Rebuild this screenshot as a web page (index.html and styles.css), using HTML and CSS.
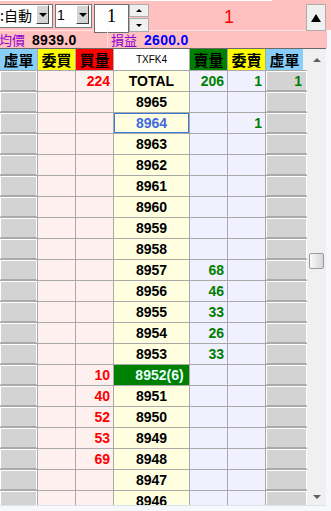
FILE: index.html
```html
<!DOCTYPE html>
<html lang="zh-Hant">
<head>
    <meta charset="UTF-8">
    <meta name="viewport" content="width=device-width, initial-scale=1.0">
    <title>TXFK4</title>
    <link rel="stylesheet" href="styles.css">
</head>
<body>
    <div id="top">
        <div class="combo" id="mode"><span class="combo_text">:自動</span><span class="drop"><i class="tri_down"></i></span></div>
        <div class="combo" id="lots"><span class="combo_text">1</span><span class="drop"><i class="tri_down"></i></span></div>
        <div id="qty">1</div>
        <div id="spin">
            <span class="spin_btn"><i class="tri_up small"></i></span>
            <span class="spin_btn"><i class="tri_down small"></i></span>
        </div>
        <div id="pos">1</div>
        <div id="collapse"><i class="tri_up big"></i></div>
    </div>
    <div id="info">
        <div class="half" id="avg"><span class="label">均價</span><span class="value">8939.0</span></div>
        <div class="half" id="pnl"><span class="label">損益</span><span class="value blue">2600.0</span></div>
    </div>
    <div id="board">
        <div id="grid">
            <div class="row head">
                <div class="h_ghost">虛單</div><div class="h_bid">委買</div><div class="h_bidq">買量</div><div class="h_sym">TXFK4</div><div class="h_askq">賣量</div><div class="h_ask">委賣</div><div class="h_ghost last">虛單</div>
            </div>
            <div class="row">
                <div class="k"></div><div class="b"></div><div class="b num red">224</div><div class="p">TOTAL</div><div class="s num green">206</div><div class="s num green">1</div><div class="k num green">1</div>
            </div>
            <div class="row">
                <div class="k"></div><div class="b"></div><div class="b"></div><div class="p">8965</div><div class="s"></div><div class="s"></div><div class="k"></div>
            </div>
            <div class="row">
                <div class="k"></div><div class="b"></div><div class="b"></div><div class="p sel">8964</div><div class="s"></div><div class="s num green">1</div><div class="k"></div>
            </div>
            <div class="row">
                <div class="k"></div><div class="b"></div><div class="b"></div><div class="p">8963</div><div class="s"></div><div class="s"></div><div class="k"></div>
            </div>
            <div class="row">
                <div class="k"></div><div class="b"></div><div class="b"></div><div class="p">8962</div><div class="s"></div><div class="s"></div><div class="k"></div>
            </div>
            <div class="row">
                <div class="k"></div><div class="b"></div><div class="b"></div><div class="p">8961</div><div class="s"></div><div class="s"></div><div class="k"></div>
            </div>
            <div class="row">
                <div class="k"></div><div class="b"></div><div class="b"></div><div class="p">8960</div><div class="s"></div><div class="s"></div><div class="k"></div>
            </div>
            <div class="row">
                <div class="k"></div><div class="b"></div><div class="b"></div><div class="p">8959</div><div class="s"></div><div class="s"></div><div class="k"></div>
            </div>
            <div class="row">
                <div class="k"></div><div class="b"></div><div class="b"></div><div class="p">8958</div><div class="s"></div><div class="s"></div><div class="k"></div>
            </div>
            <div class="row">
                <div class="k"></div><div class="b"></div><div class="b"></div><div class="p">8957</div><div class="s num green">68</div><div class="s"></div><div class="k"></div>
            </div>
            <div class="row">
                <div class="k"></div><div class="b"></div><div class="b"></div><div class="p">8956</div><div class="s num green">46</div><div class="s"></div><div class="k"></div>
            </div>
            <div class="row">
                <div class="k"></div><div class="b"></div><div class="b"></div><div class="p">8955</div><div class="s num green">33</div><div class="s"></div><div class="k"></div>
            </div>
            <div class="row">
                <div class="k"></div><div class="b"></div><div class="b"></div><div class="p">8954</div><div class="s num green">26</div><div class="s"></div><div class="k"></div>
            </div>
            <div class="row">
                <div class="k"></div><div class="b"></div><div class="b"></div><div class="p">8953</div><div class="s num green">33</div><div class="s"></div><div class="k"></div>
            </div>
            <div class="row">
                <div class="k"></div><div class="b"></div><div class="b num red">10</div><div class="p hit">8952(6)</div><div class="s"></div><div class="s"></div><div class="k"></div>
            </div>
            <div class="row">
                <div class="k"></div><div class="b"></div><div class="b num red">40</div><div class="p">8951</div><div class="s"></div><div class="s"></div><div class="k"></div>
            </div>
            <div class="row">
                <div class="k"></div><div class="b"></div><div class="b num red">52</div><div class="p">8950</div><div class="s"></div><div class="s"></div><div class="k"></div>
            </div>
            <div class="row">
                <div class="k"></div><div class="b"></div><div class="b num red">53</div><div class="p">8949</div><div class="s"></div><div class="s"></div><div class="k"></div>
            </div>
            <div class="row">
                <div class="k"></div><div class="b"></div><div class="b num red">69</div><div class="p">8948</div><div class="s"></div><div class="s"></div><div class="k"></div>
            </div>
            <div class="row">
                <div class="k"></div><div class="b"></div><div class="b"></div><div class="p">8947</div><div class="s"></div><div class="s"></div><div class="k"></div>
            </div>
            <div class="row">
                <div class="k"></div><div class="b"></div><div class="b"></div><div class="p">8946</div><div class="s"></div><div class="s"></div><div class="k"></div>
            </div>
        </div>
        <div id="vscroll">
            <div class="sb_arrow up"><i class="tri_up tiny"></i></div>
            <div class="sb_track"><div class="sb_thumb"></div></div>
            <div class="sb_arrow down"><i class="tri_down tiny"></i></div>
        </div>
    </div>
</body>
</html>
```

FILE: styles.css
```css
body{
    margin: 0;
    width: 331px;
    height: 511px;
    overflow: hidden;
    background: #f6f8fb;
    font-family: "Liberation Sans", Arial, sans-serif;
}

/* top toolbar */
#top{
    display: flex;
    align-items: flex-start;
    height: 30px;
    background: linear-gradient(#fff, #fff) no-repeat 0 0 / 272px 1px, #ffc0c0;
}
.combo{
    display: flex;
    margin-top: 4px;
    height: 22px;
    border: 1px solid #7a7a7a;
    background: #fff;
}
#mode{
    width: 52px;
    border-left: none;
}
#lots{
    width: 35px;
    margin-left: 2px;
}
.combo_text{
    flex: 1;
    font-size: 14px;
    line-height: 20px;
    white-space: nowrap;
    overflow: hidden;
}
#mode .combo_text{
    font-family: "Noto Sans CJK TC", sans-serif;
}
#lots .combo_text{
    padding-left: 1px;
}
.drop{
    display: flex;
    align-items: center;
    justify-content: center;
    box-sizing: border-box;
    width: 13px;
    height: 19px;
    margin-right: 3px;
    background: #d4d4d4;
    border: 1px solid;
    border-color: #fff #404040 #404040 #fff;
}
#lots .drop{
    margin-right: 2px;
}
.tri_down{
    width: 0;
    height: 0;
    border-left: 4px solid transparent;
    border-right: 4px solid transparent;
    border-top: 4px solid #000;
}
.tri_up{
    width: 0;
    height: 0;
    border-left: 4px solid transparent;
    border-right: 4px solid transparent;
    border-bottom: 4px solid #000;
}
.tri_down.small{
    border-width: 3px 3px 0;
}
.tri_up.small{
    border-width: 0 3px 3px;
}
.tri_up.big{
    border-width: 0 5px 8px;
}
.tri_up.tiny{
    border-width: 0 4px 4px;
    border-bottom-color: #606060;
}
.tri_down.tiny{
    border-width: 4px 4px 0;
    border-top-color: #606060;
}
#qty{
    box-sizing: border-box;
    width: 35px;
    height: 29px;
    margin: 4px 0 0 2px;
    background: #fff;
    border: 1px solid #6e6e6e;
    text-align: center;
    font-family: "Liberation Serif", serif;
    font-size: 19px;
    line-height: 22px;
}
#spin{
    display: flex;
    flex-direction: column;
    gap: 1px;
    width: 20px;
    margin-top: 4px;
}
.spin_btn{
    display: flex;
    align-items: center;
    justify-content: center;
    box-sizing: border-box;
    height: 13px;
    background: #f0f0f0;
    border: 1px solid #adadad;
}
.spin_btn + .spin_btn{
    height: 14px;
}
#pos{
    flex: 1;
    padding: 7px 0 0 3px;
    text-align: center;
    color: #ff0000;
    font-size: 18px;
    line-height: 20px;
}
#collapse{
    display: flex;
    align-items: center;
    justify-content: center;
    box-sizing: border-box;
    width: 20px;
    height: 27px;
    margin: 4px 5px 0 0;
    background: #f0f0f0;
    border: 1px solid #adadad;
}

/* average / profit strip */
#info{
    display: flex;
    width: 327px;
    height: 17px;
    border-top: 1px solid #ffe4e4;
    background: #ffc0c0;
}
.half{
    display: flex;
    align-items: center;
}
#avg{
    width: 107px;
    border-right: 1px solid #ffdcdc;
}
#avg .label{
    margin-left: -1px;
}
#pnl .label{
    margin-left: 3px;
}
.label{
    color: #9400d3;
    font-family: "Noto Sans CJK TC", sans-serif;
    font-size: 13px;
    line-height: 17px;
}
.value{
    margin-left: 7px;
    font-weight: bold;
    font-size: 14px;
    letter-spacing: 0.3px;
}
.blue{
    color: #0000ff;
}

/* price ladder */
#board{
    display: flex;
    width: 326px;
    height: 456px;
    border-top: 1px solid #696969;
    border-bottom: 1px solid #dde3ea;
    overflow: hidden;
}
#grid{
    display: flex;
    flex-direction: column;
    gap: 1px;
    width: 307px;
    background: #a9a9a9;
}
.row{
    display: grid;
    grid-template-columns: 37px 37px 37px 75px 37px 37px 41px;
    column-gap: 1px;
    flex-shrink: 0;
    height: 20px;
    font-weight: bold;
    font-size: 14px;
    line-height: 20px;
}
.row.head{
    height: 21px;
    line-height: 21px;
}
.head div{
    text-align: center;
    font-family: "Noto Sans CJK TC", sans-serif;
    font-size: 15px;
}
.h_ghost{
    background: #87cefa;
}
.h_ghost.last{
    border-right: 4px solid #f0f0f0;
}
.h_bid, .h_ask{
    background: #ffff00;
}
.h_bidq{
    background: #ff0000;
}
.h_askq{
    background: #008000;
}
.head .h_sym{
    background: #fff;
    font-family: "Liberation Sans", Arial, sans-serif;
    font-weight: normal;
    font-size: 10px;
}
.k{
    box-sizing: border-box;
    background: #d3d3d3;
    border: 1px solid;
    border-color: #fff #fff #a9a9a9 #fff;
}
.b{
    background: #fff0f0;
}
.s{
    background: #f0f0ff;
}
.p{
    background: #ffffe0;
    text-align: center;
}
.num{
    text-align: right;
    padding-right: 3px;
}
.k.num{
    padding-right: 4px;
    line-height: 18px;
}
.red{
    color: #ff0000;
}
.green{
    color: #008000;
}
.sel{
    color: #4169e1;
    box-shadow: inset 0 0 0 1px #3c78d8;
}
.hit{
    background: #008000;
    color: #e8ffff;
    padding-left: 16px;
}

/* scrollbar */
#vscroll{
    display: flex;
    flex-direction: column;
    width: 19px;
    background: #f0f0f0;
}
.sb_arrow{
    display: flex;
    align-items: center;
    justify-content: center;
}
.sb_arrow.up{
    height: 21px;
}
.sb_arrow.down{
    height: 17px;
}
.sb_track{
    flex: 1;
}
.sb_thumb{
    box-sizing: border-box;
    width: 15px;
    height: 16px;
    margin: 183px 0 0 2px;
    border: 1px solid #9a9a9a;
    border-radius: 2px;
    background: linear-gradient(90deg, #fafafa, #d6d6d6);
}
```
